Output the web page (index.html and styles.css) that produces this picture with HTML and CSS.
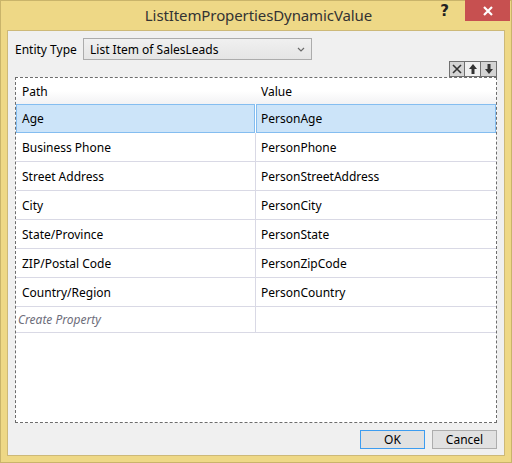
FILE: index.html
```html
<!DOCTYPE html>
<html>
<head>
<meta charset="utf-8">
<link rel="stylesheet" href="styles.css">
</head>
<body>
<div class="window">
  <div class="titlebar">
    <div class="title">ListItemPropertiesDynamicValue</div>
    <div class="help">?</div>
    <div class="close">
      <svg width="12" height="10" viewBox="0 0 12 10"><path d="M2 1 L10 9 M10 1 L2 9" stroke="#fff" stroke-width="2.2"/></svg>
    </div>
  </div>
  <div class="client">
    <div class="entity-row">
      <span class="label">Entity Type</span>
      <div class="combo">
        <span>List Item of SalesLeads</span>
        <svg class="chev" width="8" height="5" viewBox="0 0 8 5"><path d="M1 1 L4 4 L7 1" stroke="#6a6a6a" stroke-width="1.2" fill="none"/></svg>
      </div>
    </div>
    <div class="tools">
      <div class="tool">
        <svg width="12" height="12" viewBox="0 0 12 12"><path d="M2 2 L10 10 M10 2 L2 10" stroke="#333" stroke-width="1.6"/></svg>
      </div>
      <div class="tool light">
        <svg width="10" height="12" viewBox="0 0 10 12"><path d="M5 1 L9 6 L6.5 6 L6.5 11 L3.5 11 L3.5 6 L1 6 Z" fill="#333"/></svg>
      </div>
      <div class="tool">
        <svg width="10" height="12" viewBox="0 0 10 12"><path d="M5 11 L9 6 L6.5 6 L6.5 1 L3.5 1 L3.5 6 L1 6 Z" fill="#333"/></svg>
      </div>
    </div>
    <div class="gridbox">
      <div class="grid">
        <div class="hcell">Path</div><div class="hcell">Value</div>
        <div class="cell sel">Age</div><div class="cell sel">PersonAge</div>
        <div class="cell">Business Phone</div><div class="cell">PersonPhone</div>
        <div class="cell">Street Address</div><div class="cell">PersonStreetAddress</div>
        <div class="cell">City</div><div class="cell">PersonCity</div>
        <div class="cell">State/Province</div><div class="cell">PersonState</div>
        <div class="cell">ZIP/Postal Code</div><div class="cell">PersonZipCode</div>
        <div class="cell">Country/Region</div><div class="cell">PersonCountry</div>
        <div class="cell new">Create Property</div><div class="cell new"></div>
      </div>
    </div>
    <div class="buttons">
      <div class="btn default">OK</div>
      <div class="btn">Cancel</div>
    </div>
  </div>
</div>
</body>
</html>
```

FILE: styles.css
```css
html, body {
  margin: 0;
  padding: 0;
  background: #ffffff;
}
body {
  font-family: "Noto Sans", "Open Sans", sans-serif;
  font-size: 12px;
  color: #000;
}
.window {
  width: 512px;
  height: 463px;
  box-sizing: border-box;
  background: #eed886;
  border: 1px solid #c9b46a;
  display: flex;
  flex-direction: column;
  padding: 0 6px 6px 6px;
}
.titlebar {
  height: 29px;
  display: flex;
  align-items: flex-start;
  position: relative;
  margin-right: -5px;
}
.title {
  position: absolute;
  left: 0;
  right: 0;
  top: 4px;
  text-align: center;
  font-size: 15px;
  color: #333;
  font-family: "Noto Sans", sans-serif;
  letter-spacing: -0.1px;
}
.help {
  position: absolute;
  right: 61px;
  top: 1px;
  font-weight: bold;
  font-size: 15px;
  color: #222;
  font-family: "DejaVu Sans", sans-serif;
}
.close {
  position: absolute;
  right: 0;
  top: -1px;
  width: 45px;
  height: 21px;
  background: #c75050;
  display: flex;
  align-items: center;
  justify-content: center;
}
.client {
  flex: 1;
  background: #f0f0f0;
  border: 1px solid #cdb978;
  position: relative;
  display: flex;
  flex-direction: column;
  padding: 0 7px 0 7px;
}
.entity-row {
  display: flex;
  align-items: center;
  margin-top: 7px;
  height: 22px;
}
.label {
  width: 68px;
  color: #000;
}
.combo {
  width: 221px;
  height: 20px;
  border: 1px solid #acacac;
  background: linear-gradient(#f0f0f0, #e5e5e5);
  display: flex;
  align-items: center;
  padding-left: 6px;
  box-sizing: content-box;
  position: relative;
}
.chev {
  position: absolute;
  right: 6px;
  top: 8px;
}
.tools {
  display: flex;
  justify-content: flex-end;
  margin-top: 1px;
  height: 16px;
}
.tool {
  width: 14px;
  height: 14px;
  border: 1px solid #707070;
  background: #d4d4d4;
  display: flex;
  align-items: center;
  justify-content: center;
}
.tool + .tool {
  border-left: none;
  width: 15px;
}
.tool.light {
  background: #f0f0f0;
}
.gridbox {
  height: 344px;
  border: 1px dashed #6d6d6d;
  background: #fff;
}
.grid {
  display: grid;
  grid-template-columns: 240px 1fr;
  grid-auto-rows: 29px;
  grid-template-rows: 26px;
}
.hcell {
  background: linear-gradient(#ffffff, #ffffff 50%, #f2f2f4);
  display: flex;
  align-items: center;
  padding-left: 6px;
  height: 26px;
}
.hcell + .hcell {
  padding-left: 5px;
}
.cell {
  box-sizing: border-box;
  display: flex;
  align-items: center;
  padding-left: 6px;
  border-bottom: 1px solid #d9d9e5;
}
.cell:nth-child(odd) {
  border-right: 1px solid #d9d9e5;
}
.cell:nth-child(even) {
  padding-left: 5px;
}
.cell.sel {
  background: #cce4f9;
  border: 1px solid #84bdf0;
  padding-left: 5px;
}
.cell.sel:nth-child(odd) {
  margin-right: 1px;
  border-right: 1px solid #84bdf0;
}
.cell.sel:nth-child(even) {
  padding-left: 4px;
}
.cell.new {
  height: 26px;
  font-style: italic;
  color: #6d6d7a;
  padding-left: 2px;
}
.buttons {
  display: flex;
  justify-content: flex-end;
  gap: 7px;
  margin-top: 7px;
}
.btn {
  width: 63px;
  height: 17px;
  border: 1px solid #adadad;
  background: #e1e1e1;
  display: flex;
  align-items: center;
  justify-content: center;
  color: #000;
}
.btn.default {
  border-color: #3c9cf0;
}
```
